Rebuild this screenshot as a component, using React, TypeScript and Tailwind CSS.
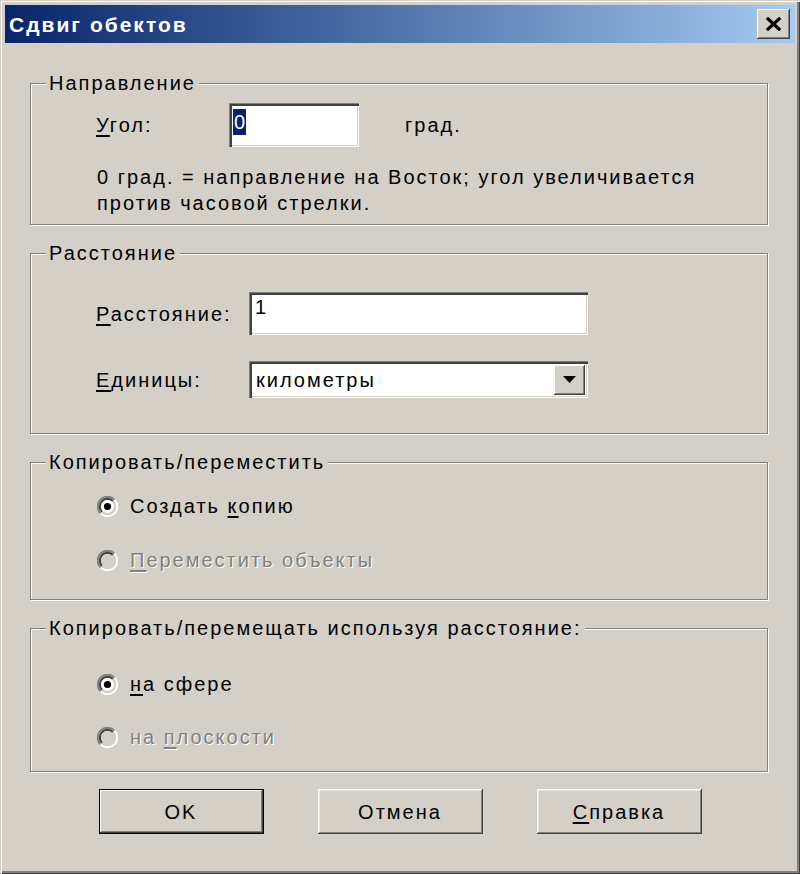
import React from 'react';

const face = "font-['Liberation_Sans',Arial,sans-serif]";

function U({ children }: { children: React.ReactNode }) {
    return <span className="underline underline-offset-[3px] decoration-[2px]">{children}</span>;
}

function GroupBox({ title, className, children }: { title: string; className?: string; children: React.ReactNode }) {
    return (
        <fieldset className={`border border-[#808080] shadow-[1px_1px_0_#fff,inset_1px_1px_0_#fff] ${className ?? ''}`}>
            <legend className="ml-[15px] px-[3px] bg-[#d4d0c8] leading-[24px]">{title}</legend>
            {children}
        </fieldset>
    );
}

function Radio({ checked, disabled, children }: { checked?: boolean; disabled?: boolean; children: React.ReactNode }) {
    return (
        <div className="flex items-center h-[26px] pl-[66px] gap-[12px]">
            <svg width="21" height="21" viewBox="0 0 21 21">
                <path d="M17.4 3.6 A9.5 9.5 0 0 0 3.6 17.4" fill="none" stroke="#808080" strokeWidth="2" />
                <path d="M15.9 5.1 A7.5 7.5 0 0 0 5.1 15.9" fill="none" stroke="#404040" strokeWidth="2" />
                <path d="M3.6 17.4 A9.5 9.5 0 0 0 17.4 3.6" fill="none" stroke="#ffffff" strokeWidth="2" />
                <path d="M5.1 15.9 A7.5 7.5 0 0 0 15.9 5.1" fill="none" stroke="#d4d0c8" strokeWidth="2" />
                <circle cx="10.5" cy="10.5" r="6.5" fill={disabled ? '#d4d0c8' : '#ffffff'} />
                {checked && <circle cx="10.5" cy="10.5" r="3.6" fill="#000" />}
            </svg>
            <span className={disabled ? 'text-[#808080] [text-shadow:1px_1px_0_#fff]' : 'text-black'}>{children}</span>
        </div>
    );
}

function Button({ children, isDefault }: { children: React.ReactNode; isDefault?: boolean }) {
    return (
        <button
            className={`w-[165px] h-[45px] bg-[#d4d0c8] flex items-center justify-center ${
                isDefault
                    ? 'border border-black shadow-[inset_-1px_-1px_0_#404040,inset_1px_1px_0_#fff,inset_-2px_-2px_0_#808080]'
                    : 'shadow-[inset_-1px_-1px_0_#404040,inset_1px_1px_0_#fff,inset_-2px_-2px_0_#808080,inset_2px_2px_0_#e8e6e0]'
            }`}
        >
            {children}
        </button>
    );
}

const sunken =
    'bg-white shadow-[inset_1px_1px_0_#808080,inset_3px_3px_0_#404040,inset_-1px_-1px_0_#fff,inset_-2px_-2px_0_#d4d0c8]';

export default function App() {
    return (
        <div className={`${face} w-[800px] h-[874px] bg-[#d4d0c8] p-[5px] text-[20px] tracking-[2px] text-black shadow-[inset_1px_1px_0_#d4d0c8,inset_2px_2px_0_#fff,inset_-1px_-1px_0_#404040,inset_-3px_-3px_0_#808080]`}>
            {/* Title bar */}
            <div className="h-[38px] flex items-center justify-between pl-[4px] pr-[5px] bg-gradient-to-r from-[#0a246a] to-[#a6caf0]">
                <span className="text-white text-[21px] font-bold tracking-[2px] mt-[2px]">Сдвиг обектов</span>
                <div className="w-[33px] h-[30px] bg-[#d4d0c8] flex items-center justify-center shadow-[inset_-1px_-1px_0_#404040,inset_1px_1px_0_#fff,inset_-2px_-2px_0_#808080]">
                    <svg width="15" height="14" viewBox="0 0 15 14">
                        <path d="M2 2 L13 12 M13 2 L2 12" stroke="#000" strokeWidth="3.2" strokeLinecap="square" />
                    </svg>
                </div>
            </div>

            <div className="pl-[25px] pr-[27px]">
                {/* Направление */}
                <GroupBox title="Направление" className="mt-[28px] pb-[8px]">
                    <div className="flex items-center mt-[8px] h-[44px]">
                        <span className="ml-[65px] w-[133px]">
                            <U>У</U>гол:
                        </span>
                        <div className={`${sunken} w-[130px] h-[44px] pl-[4px] pt-[4px]`}>
                            <span className="inline-block bg-[#0a246a] text-white leading-[26px] px-[1px] tracking-normal">0</span>
                        </div>
                        <span className="ml-[46px]">град.</span>
                    </div>
                    <p className="ml-[66px] mt-[17px] leading-[26px]">
                        0 град. = направление на Восток; угол увеличивается
                        <br />
                        против часовой стрелки.
                    </p>
                </GroupBox>

                {/* Расстояние */}
                <GroupBox title="Расстояние" className="mt-[16px] pb-[35px]">
                    <div className="flex items-center mt-[27px]">
                        <span className="ml-[65px] w-[153px]">
                            <U>Р</U>асстояние:
                        </span>
                        <div className={`${sunken} w-[339px] h-[43px] pl-[6px] pt-[2px] leading-[26px]`}>1</div>
                    </div>
                    <div className="flex items-center mt-[26px]">
                        <span className="ml-[65px] w-[153px]">
                            <U>Е</U>диницы:
                        </span>
                        <div className={`${sunken} w-[339px] h-[37px] flex items-center justify-between pl-[7px] pr-[3px]`}>
                            <span>километры</span>
                            <div className="w-[31px] h-[30px] bg-[#d4d0c8] flex items-center justify-center shadow-[inset_-1px_-1px_0_#404040,inset_1px_1px_0_#fff,inset_-2px_-2px_0_#808080]">
                                <svg width="13" height="8" viewBox="0 0 13 8">
                                    <path d="M0 0 H13 L6.5 7 Z" fill="#000" />
                                </svg>
                            </div>
                        </div>
                    </div>
                </GroupBox>

                {/* Копировать/переместить */}
                <GroupBox title="Копировать/переместить" className="mt-[16px] pb-[26px]">
                    <div className="mt-[19px]">
                        <Radio checked>
                            Создать <U>к</U>опию
                        </Radio>
                    </div>
                    <div className="mt-[28px]">
                        <Radio disabled>
                            <U>П</U>ереместить объекты
                        </Radio>
                    </div>
                </GroupBox>

                {/* Копировать/перемещать используя расстояние */}
                <GroupBox title="Копировать/перемещать используя расстояние:" className="mt-[16px] pb-[21px]">
                    <div className="mt-[31px]">
                        <Radio checked>
                            <U>н</U>а сфере
                        </Radio>
                    </div>
                    <div className="mt-[27px]">
                        <Radio disabled>
                            на <U>п</U>лоскости
                        </Radio>
                    </div>
                </GroupBox>

                {/* Buttons */}
                <div className="flex justify-center gap-[54px] mt-[17px] pl-[2px]">
                    <Button isDefault>OK</Button>
                    <Button>Отмена</Button>
                    <Button>
                        <span>
                            <U>С</U>правка
                        </span>
                    </Button>
                </div>
            </div>
        </div>
    );
}
